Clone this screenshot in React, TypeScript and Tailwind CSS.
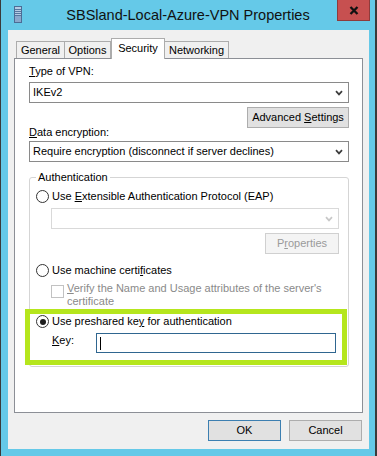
import clsx from 'clsx';
import type { ReactNode } from 'react';

const Chevron = ({ color = '#3c3c3c' }: { color?: string }) => (
  <svg width="8" height="6" viewBox="0 0 8 6" className="shrink-0">
    <path d="M1 1.2 L4 4.4 L7 1.2" fill="none" stroke={color} strokeWidth="1.7" />
  </svg>
);

function Combo({ value, disabled }: { value?: string; disabled?: boolean }) {
  return (
    <div
      className={clsx(
        'flex h-[21px] items-center justify-between border bg-white pl-[3px] pr-[5px]',
        disabled ? 'border-[#d9d9d9]' : 'border-[#8a8a8a]',
      )}
    >
      <span className="leading-[13px]">{value}</span>
      <Chevron color={disabled ? '#c8c8c8' : '#3c3c3c'} />
    </div>
  );
}

function Btn({
  children,
  className,
  disabled,
  isDefault,
}: {
  children: ReactNode;
  className?: string;
  disabled?: boolean;
  isDefault?: boolean;
}) {
  return (
    <button
      type="button"
      className={clsx(
        'flex h-[21px] items-center justify-center border leading-[13px]',
        disabled
          ? 'border-[#d0d0d0] bg-[#f4f4f4] text-[#9a9a9a]'
          : 'bg-[#e1e1e1] text-black',
        !disabled && (isDefault ? 'border-[#3c7fb1]' : 'border-[#adadad]'),
        className,
      )}
    >
      <span>{children}</span>
    </button>
  );
}

function Radio({ checked }: { checked?: boolean }) {
  return (
    <span className="flex h-[13px] w-[13px] shrink-0 items-center justify-center rounded-full border border-[#333] bg-white">
      {checked && <span className="h-[6px] w-[6px] rounded-full bg-[#1c1c1c]" />}
    </span>
  );
}

export default function App() {
  return (
    <div className="flex h-[456px] w-[377px] flex-col border-l border-r-2 border-[#3a3a3a] bg-[#65c9e8] font-['Liberation_Sans',Arial,sans-serif] text-[11px] text-black">
      {/* title bar */}
      <div className="flex h-[30px] shrink-0 items-start">
        <div className="w-[50px] pl-[13px] pt-[6px]">
          <svg width="8" height="17" viewBox="0 0 8 17">
            <rect x="0.5" y="0.5" width="7" height="16" fill="#8aa8cc" stroke="#4c6c95" />
            <rect x="1" y="1" width="6" height="8" fill="#b5cbe4" />
            <path d="M1 3.5 H7 M1 5.5 H7 M1 7.5 H7 M1 9.5 H7" stroke="#56779f" strokeWidth="1" />
          </svg>
        </div>
        <div className="flex-1 pt-[1px] text-center text-[14.5px] leading-[29px] text-[#111]">
          SBSland-Local-Azure-VPN Properties
        </div>
        <div className="flex w-[50px] justify-end pr-[5px]">
          <div className="flex h-[21px] w-[33px] items-center justify-center border border-t-0 border-[#8e3b3b] bg-[#c75050]">
            <svg width="10" height="9" viewBox="0 0 10 9">
              <path d="M1.5 1 L8.5 8 M8.5 1 L1.5 8" stroke="#111" strokeWidth="2.3" />
            </svg>
          </div>
        </div>
      </div>

      {/* body */}
      <div className="mx-[6px] mb-[7px] ml-[7px] flex flex-1 flex-col bg-[#f0f0f0]">
        <div className="mt-[8px] flex h-[20px] items-end pl-[8px]">
          <div className="flex h-[17px] w-[49px] justify-center border border-b-0 border-[#acacac] bg-[#f0f0f0] pt-[2px] leading-[13px]">
            General
          </div>
          <div className="-ml-px flex h-[17px] w-[47px] justify-center border border-b-0 border-[#acacac] bg-[#f0f0f0] pt-[2px] leading-[13px]">
            Options
          </div>
          <div className="relative z-10 -mb-px flex h-[21px] w-[54px] justify-center border border-b-0 border-[#acacac] bg-white pt-[3px] leading-[13px]">
            Security
          </div>
          <div className="-ml-px flex h-[17px] w-[65px] justify-center border border-b-0 border-[#acacac] bg-[#f0f0f0] pt-[2px] leading-[13px]">
            Networking
          </div>
        </div>

        <div className="ml-[6px] flex h-[355px] w-[349px] flex-col border border-[#8c8f96] bg-white pl-[14px] pr-[13px] pt-[6px]">
          <div className="leading-[13px]">
            <u>T</u>ype of VPN:
          </div>
          <div className="mt-[4px]">
            <Combo value="IKEv2" />
          </div>
          <Btn className="ml-auto mt-[4px] w-[102px]">
            Advanced <u>S</u>ettings
          </Btn>
          <div className="-mt-[2px] leading-[13px]">
            <u>D</u>ata encryption:
          </div>
          <div className="mt-[2px]">
            <Combo value="Require encryption (disconnect if server declines)" />
          </div>

          <fieldset className="mt-[9px] w-[320px] rounded-[3px] border border-[#d5d5d5] pb-[1px] pl-[6px] pr-[9px] pt-[6px]">
            <legend className="px-[2px] leading-[13px]">Authentication</legend>

            <div className="flex h-[13px] items-center gap-[3px]">
              <Radio />
              <span className="leading-[13px]">
                Use <u>E</u>xtensible Authentication Protocol (EAP)
              </span>
            </div>
            <div className="ml-[15px] mt-[5px]">
              <Combo disabled />
            </div>
            <div className="mt-[4px] flex justify-end">
              <Btn disabled className="w-[74px]">
                P<u>r</u>operties
              </Btn>
            </div>

            <div className="mt-[10px] flex h-[13px] items-center gap-[3px]">
              <Radio />
              <span className="leading-[13px]">
                Use machine certi<u>f</u>icates
              </span>
            </div>
            <div className="ml-[15px] mt-[5px] flex items-start gap-[3px]">
              <span className="mt-[3px] h-[13px] w-[13px] shrink-0 border border-[#c2c2c2] bg-white" />
              <span className="leading-[13px] text-[#8a8a8a]">
                <u>V</u>erify the Name and Usage attributes of the server&apos;s
                <br />
                certificate
              </span>
            </div>

            <div className="-ml-[11px] -mr-[8px] mt-[1px] border-[5px] border-[#b5e61d] pb-[7px] pl-[6px] pr-[6px] pt-[1px]">
              <div className="flex h-[13px] items-center gap-[3px]">
                <Radio checked />
                <span className="leading-[13px]">
                  Use preshared ke<u>y</u> for authentication
                </span>
              </div>
              <div className="mt-[5px] flex items-start pl-[16px]">
                <span className="mt-[1px] w-[44px] shrink-0 leading-[13px]">
                  <u>K</u>ey:
                </span>
                <div className="flex h-[20px] flex-1 items-center border border-[#2f6690] bg-white pl-[3px]">
                  <span className="h-[13px] w-px bg-black" />
                </div>
              </div>
            </div>
          </fieldset>
        </div>

        <div className="mt-[7px] flex justify-end gap-[8px] pr-[7px]">
          <Btn isDefault className="w-[73px]">
            OK
          </Btn>
          <Btn className="w-[73px]">Cancel</Btn>
        </div>
      </div>
    </div>
  );
}
